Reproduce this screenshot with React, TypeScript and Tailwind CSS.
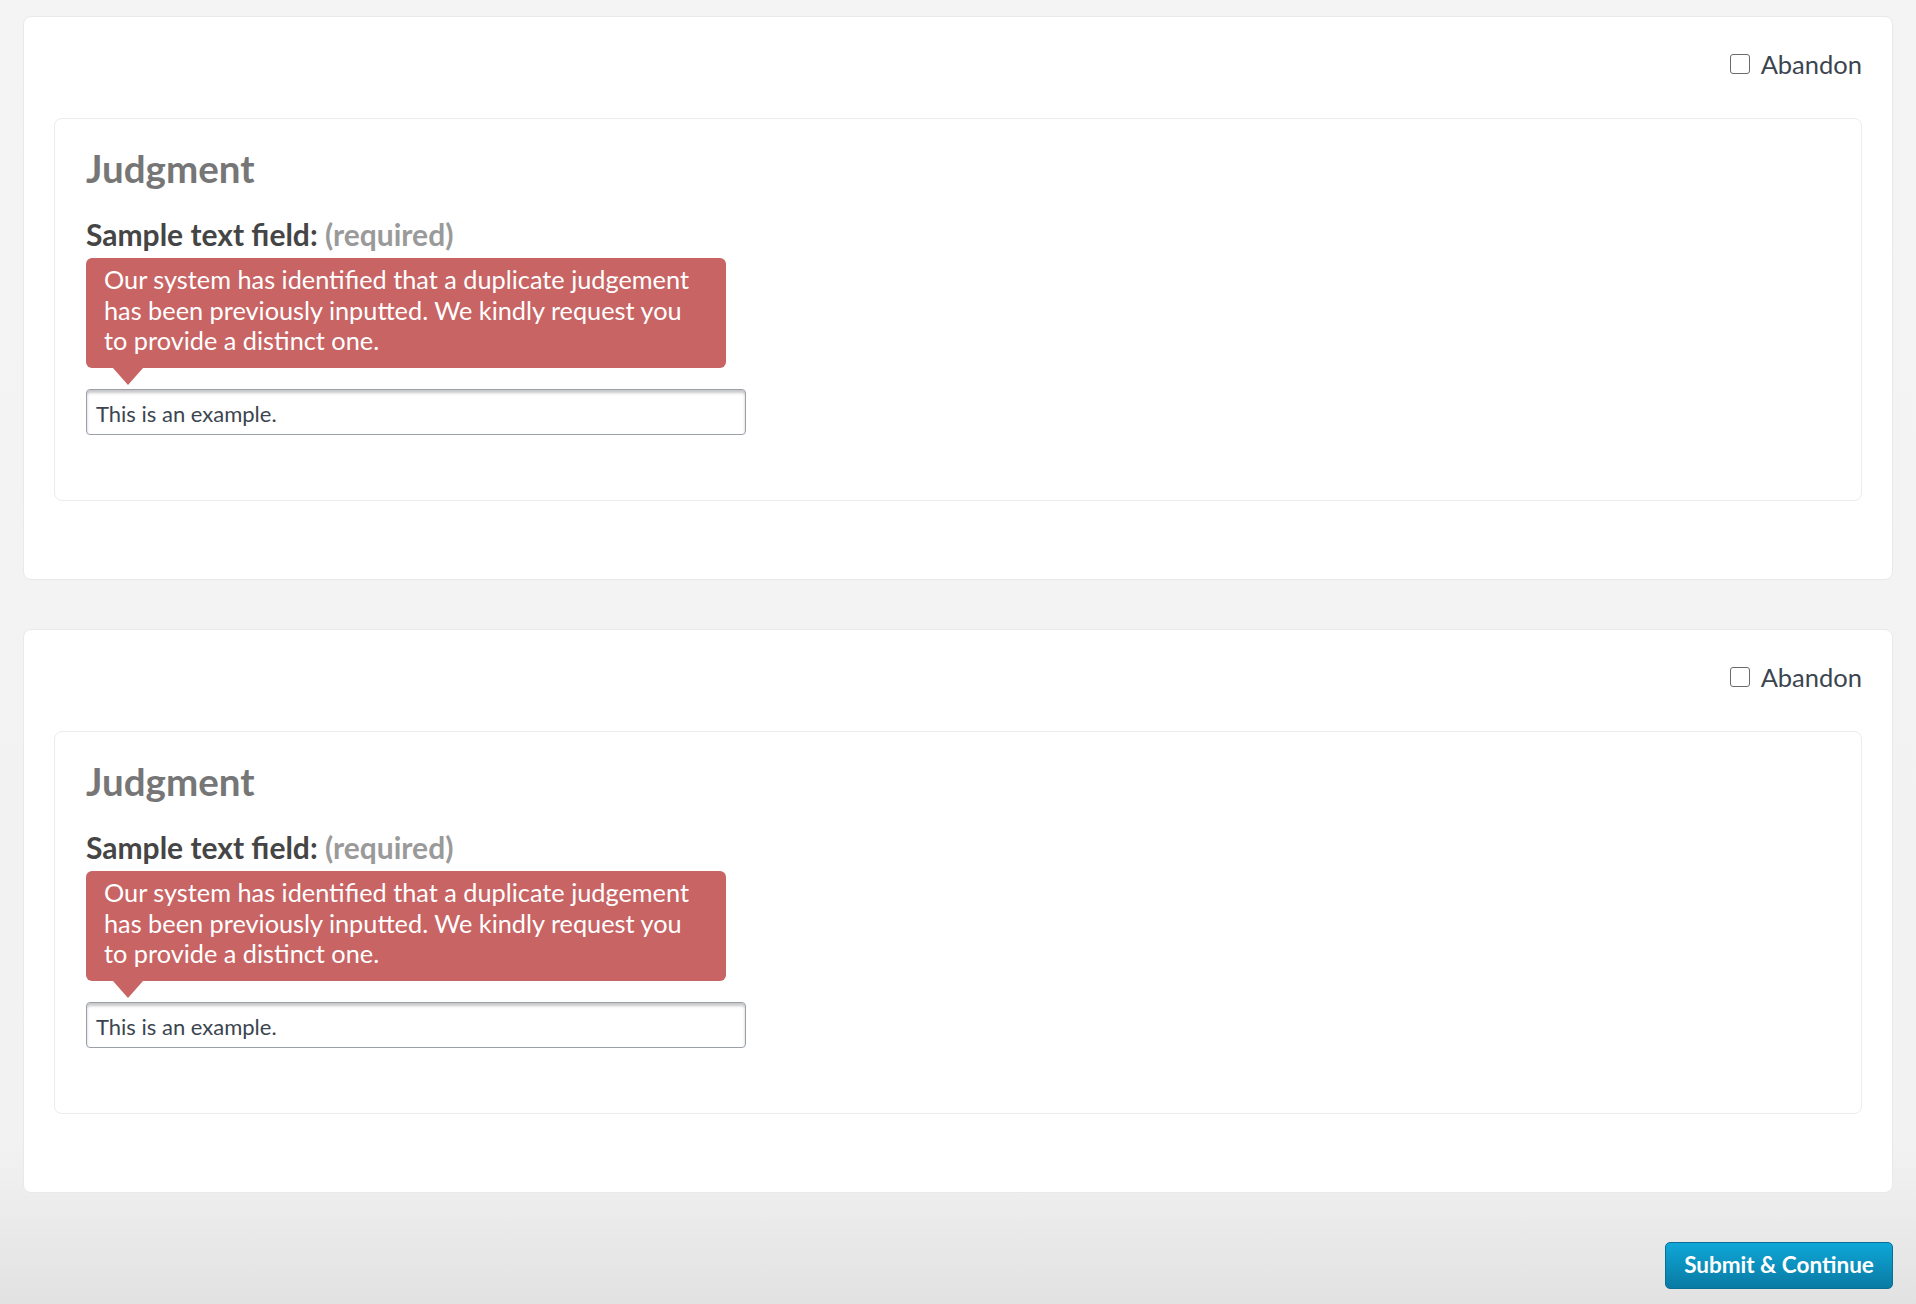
import React from "react";

function Card() {
  return (
    <div className="h-[564px] bg-white rounded-[8px] border border-[#e9e9e9] px-[30px] flex flex-col">
      <div className="mt-[37px] h-[20px] flex justify-end items-center">
        <label className="flex items-center">
          <span className="w-[20px] h-[20px] border-[1.5px] border-[#6b6b6b] rounded-[3px] bg-white mr-[11px]" />
          <span className="text-[25.5px] leading-[20px] text-[#3b4550]">Abandon</span>
        </label>
      </div>
      <div className="mt-[44px] h-[383px] border border-[#ececec] rounded-[8px] pl-[31px]">
        <h2 className="mt-[30px] text-[38.5px] leading-[38px] font-bold text-[#767676]">Judgment</h2>
        <div className="mt-[33px] text-[30px] leading-[28px] font-bold text-[#454545]">
          Sample text field: <span className="text-[#9a9a9a]">(required)</span>
        </div>
        <div className="relative mt-[10px] w-[640px] h-[110px] bg-[#c86464] rounded-[6px] pl-[18px] pt-[6px] text-[25.3px] leading-[30.5px] text-white">
          Our system has identified that a duplicate judgement
          <br />
          has been previously inputted. We kindly request you
          <br />
          to provide a distinct one.
          <span className="absolute left-[27px] top-full w-0 h-0 border-l-[15px] border-r-[15px] border-t-[17px] border-l-transparent border-r-transparent border-t-[#c86464]" />
        </div>
        <div className="mt-[21px] w-[660px] h-[46px] border border-[#9aa0a8] rounded-[4px] bg-white shadow-[inset_0_3px_3px_rgba(0,0,0,0.22)] pl-[9px] pt-[2px] flex items-center text-[22px] text-[#3b4550]">
          This is an example.
        </div>
      </div>
    </div>
  );
}

export default function App() {
  return (
    <div
      className="min-h-[1304px] w-full bg-[linear-gradient(to_bottom,#f4f4f4_0%,#f2f2f2_88%,#e2e2e2_100%)] px-[23px] pt-[16px] pb-[15px]"
      style={{ fontFamily: "Lato, 'Open Sans', sans-serif" }}
    >
      <div className="flex flex-col gap-[49px]">
        <Card />
        <Card />
      </div>
      <div className="mt-[49px] flex justify-end">
        <button className="w-[228px] h-[47px] rounded-[5px] border border-[#0b6f93] bg-[linear-gradient(to_bottom,#0ea7d8,#0a7aa3)] text-white text-[22.5px] font-bold leading-none">
          Submit &amp; Continue
        </button>
      </div>
    </div>
  );
}
